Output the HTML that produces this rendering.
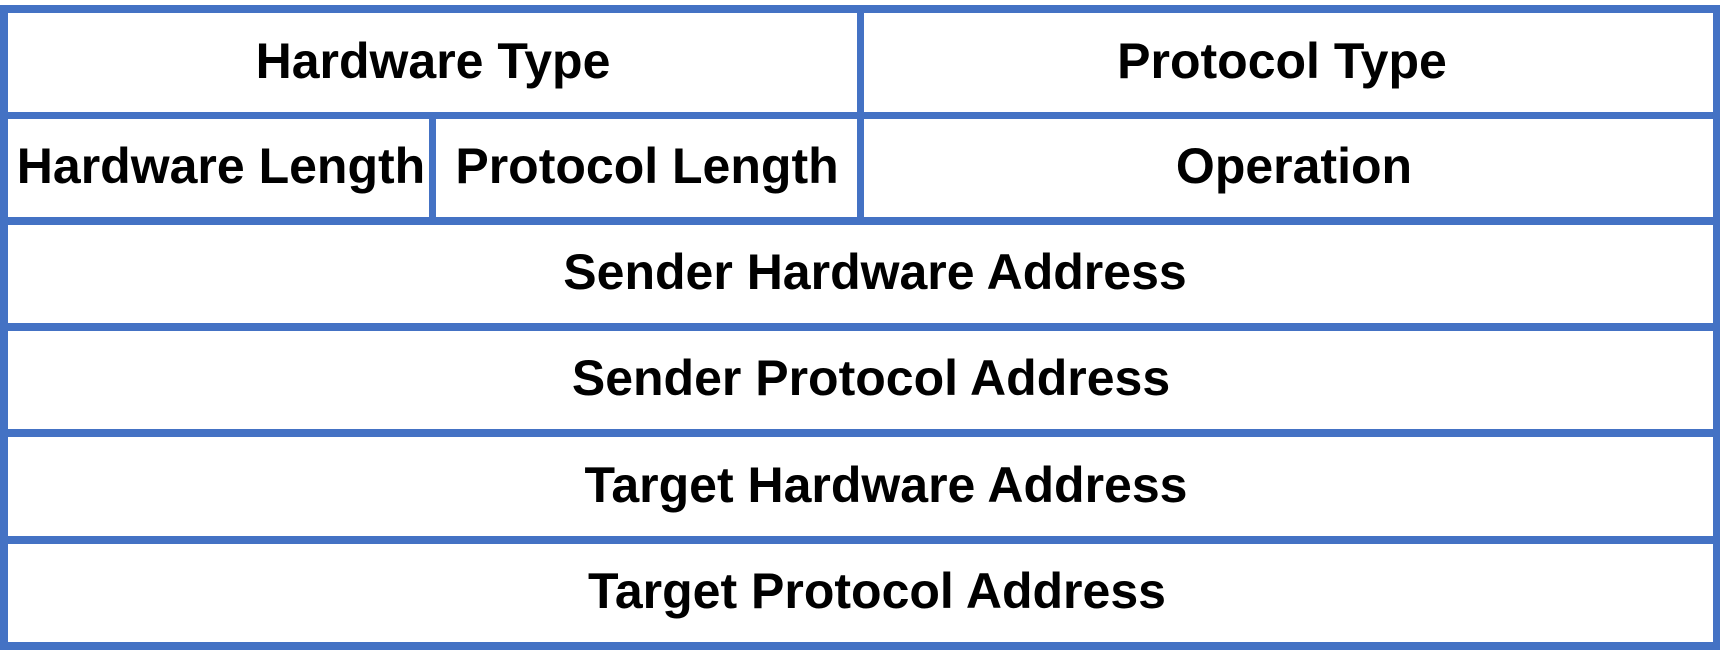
<!DOCTYPE html>
<html><head><meta charset="utf-8"><style>
html,body{margin:0;padding:0;background:#fff;width:1724px;height:651px;overflow:hidden;position:relative}
.l{position:absolute;background:#4472C4}
.t{position:absolute;display:flex;align-items:center;justify-content:center;font-family:"Liberation Sans",sans-serif;font-weight:bold;font-size:50px;color:#000;white-space:nowrap;box-sizing:border-box;padding-bottom:4px}
</style></head><body>
<div class="l" style="left:0;top:5px;width:1720px;height:8px"></div>
<div class="l" style="left:0;top:112px;width:1720px;height:7px"></div>
<div class="l" style="left:0;top:217px;width:1720px;height:8px"></div>
<div class="l" style="left:0;top:323px;width:1720px;height:8px"></div>
<div class="l" style="left:0;top:429px;width:1720px;height:8px"></div>
<div class="l" style="left:0;top:536px;width:1720px;height:8px"></div>
<div class="l" style="left:0;top:642px;width:1720px;height:8px"></div>
<div class="l" style="left:0;top:5px;width:8px;height:645px"></div>
<div class="l" style="left:1713px;top:5px;width:7px;height:645px"></div>
<div class="l" style="left:857px;top:5px;width:7px;height:220px"></div>
<div class="l" style="left:429px;top:112px;width:7px;height:113px"></div>

<div class="t" style="left:233px;width:400px;top:13px;height:99px">Hardware Type</div>
<div class="t" style="left:1082px;width:400px;top:13px;height:99px">Protocol Type</div>
<div class="t" style="left:21px;width:400px;top:119px;height:98px">Hardware Length</div>
<div class="t" style="left:447px;width:400px;top:119px;height:98px">Protocol Length</div>
<div class="t" style="left:1094px;width:400px;top:119px;height:98px">Operation</div>
<div class="t" style="left:475px;width:800px;top:225px;height:98px">Sender Hardware Address</div>
<div class="t" style="left:471px;width:800px;top:331px;height:98px">Sender Protocol Address</div>
<div class="t" style="left:486px;width:800px;top:437px;height:99px">Target Hardware Address</div>
<div class="t" style="left:477px;width:800px;top:544px;height:98px">Target Protocol Address</div>
</body></html>
